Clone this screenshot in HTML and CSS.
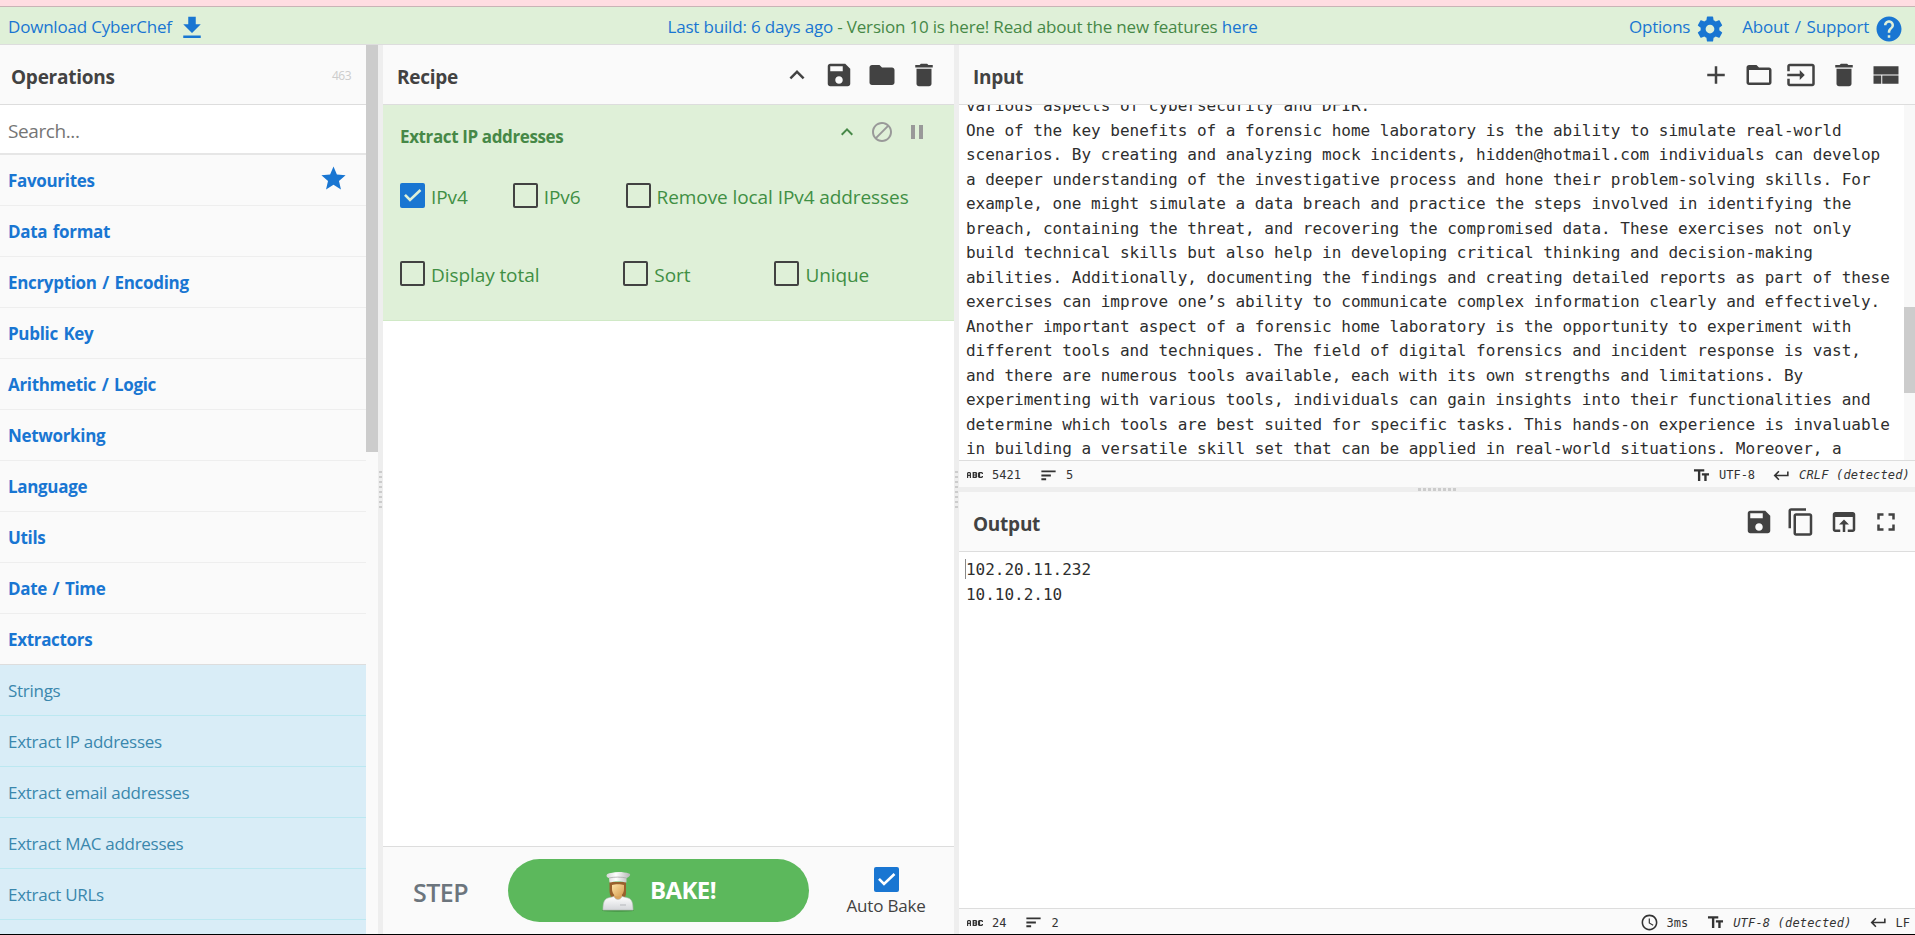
FILE: index.html
```html
<!DOCTYPE html>
<html lang="en">
<head>
<meta charset="utf-8">
<title>CyberChef</title>
<link rel="stylesheet" href="styles.css">
</head>
<body>
<svg class="defs" width="0" height="0">
  <symbol id="save" viewBox="0 0 24 24"><path d="M17 3H5c-1.11 0-2 .9-2 2v14c0 1.1.89 2 2 2h14c1.1 0 2-.9 2-2V7l-4-4zm-5 16c-1.66 0-3-1.34-3-3s1.34-3 3-3 3 1.34 3 3-1.34 3-3 3zm3-10H5V5h10v4z"/></symbol>
  <symbol id="folder" viewBox="0 0 24 24"><path d="M10 4H4c-1.1 0-1.99.9-1.99 2L2 18c0 1.1.9 2 2 2h16c1.1 0 2-.9 2-2V8c0-1.1-.9-2-2-2h-8l-2-2z"/></symbol>
  <symbol id="folder-open" viewBox="0 0 24 24"><path d="M20 6h-8l-2-2H4c-1.1 0-1.99.9-1.99 2L2 18c0 1.1.9 2 2 2h16c1.1 0 2-.9 2-2V8c0-1.1-.9-2-2-2zm0 12H4V8h16v10z"/></symbol>
  <symbol id="trash" viewBox="0 0 24 24"><path d="M6 19c0 1.1.9 2 2 2h8c1.1 0 2-.9 2-2V7H6v12zM19 4h-3.500l-1-1h-5l-1 1H5v2h14V4z"/></symbol>
  <symbol id="up" viewBox="0 0 24 24"><path d="M7.410 15.410 12 10.830l4.590 4.580L18 14l-6-6-6 6z"/></symbol>
  <symbol id="block" viewBox="0 0 24 24"><path d="M12 2C6.480 2 2 6.480 2 12s4.480 10 10 10 10-4.480 10-10S17.520 2 12 2zM4 12c0-4.420 3.580-8 8-8 1.850 0 3.550.63 4.900 1.690L5.690 16.900C4.630 15.550 4 13.850 4 12zm8 8c-1.850 0-3.550-.63-4.900-1.690L18.310 7.100C19.370 8.450 20 10.150 20 12c0 4.420-3.580 8-8 8z"/></symbol>
  <symbol id="pause" viewBox="0 0 24 24"><path d="M6 19h4V5H6v14zm8-14v14h4V5h-4z"/></symbol>
  <symbol id="plus" viewBox="0 0 24 24"><path d="M19 13h-6v6h-2v-6H5v-2h6V5h2v6h6v2z"/></symbol>
  <symbol id="input" viewBox="0 0 24 24"><path d="M21 3.010H3c-1.100 0-2 .9-2 2V9h2V4.990h18v14.030H3V15H1v4.010c0 1.100.9 1.980 2 1.980h18c1.100 0 2-.88 2-1.980v-14c0-1.110-.9-2-2-2zM11 16l4-4-4-4v3H1v2h10v3z"/></symbol>
  <symbol id="grid" viewBox="0 0 24 24"><path d="M2 5h20v6.500H2zM2 12.300h6.200V19H2zM9 12.300h13V19H9z"/></symbol>
  <symbol id="gear" viewBox="0 0 24 24"><path d="M19.430 12.980c.04-.32.07-.64.07-.98s-.03-.66-.07-.98l2.110-1.650c.19-.15.24-.42.12-.64l-2-3.460c-.12-.22-.39-.3-.61-.22l-2.490 1c-.52-.4-1.080-.73-1.690-.98l-.38-2.650C14.460 2.180 14.250 2 14 2h-4c-.25 0-.46.18-.49.42l-.38 2.650c-.61.25-1.170.59-1.690.98l-2.490-1c-.23-.09-.49 0-.61.22l-2 3.460c-.13.22-.07.49.12.64l2.110 1.650c-.04.32-.07.65-.07.98s.03.66.07.98l-2.110 1.650c-.19.15-.24.42-.12.64l2 3.460c.12.22.39.3.61.22l2.490-1c.52.4 1.080.73 1.690.98l.38 2.650c.03.24.24.42.49.42h4c.25 0 .46-.18.49-.42l.38-2.650c.61-.25 1.170-.59 1.690-.98l2.490 1c.23.09.49 0 .61-.22l2-3.460c.12-.22.07-.49-.12-.64l-2.110-1.650zM12 15.500c-1.930 0-3.500-1.570-3.500-3.500s1.570-3.500 3.500-3.500 3.500 1.570 3.500 3.500-1.570 3.500-3.500 3.500z"/></symbol>
  <symbol id="help" viewBox="0 0 24 24"><path d="M12 2C6.480 2 2 6.480 2 12s4.480 10 10 10 10-4.480 10-10S17.520 2 12 2zm1 17h-2v-2h2v2zm2.070-7.750l-.9.920C13.450 12.900 13 13.500 13 15h-2v-.5c0-1.100.45-2.100 1.170-2.830l1.240-1.260c.37-.36.59-.86.59-1.410 0-1.100-.9-2-2-2s-2 .9-2 2H8c0-2.210 1.790-4 4-4s4 1.790 4 4c0 .88-.36 1.680-.93 2.250z"/></symbol>
  <symbol id="download" viewBox="0 0 24 24"><path d="M19 9h-4V3H9v6H5l7 7 7-7zM5 18v2h14v-2H5z"/></symbol>
  <symbol id="star" viewBox="0 0 24 24"><path d="M12 17.270 18.180 21l-1.640-7.030L22 9.240l-7.190-.61L12 2 9.190 8.630 2 9.240l5.460 4.730L5.820 21z"/></symbol>
  <symbol id="copy" viewBox="0 0 24 24"><path d="M16 1H4c-1.100 0-2 .9-2 2v14h2V3h12V1zm3 4H8c-1.100 0-2 .9-2 2v14c0 1.100.9 2 2 2h11c1.100 0 2-.9 2-2V7c0-1.100-.9-2-2-2zm0 16H8V7h11v14z"/></symbol>
  <symbol id="open" viewBox="0 0 24 24"><path d="M19 4H5c-1.110 0-2 .9-2 2v12c0 1.100.89 2 2 2h4v-2H5V8h14v10h-4v2h4c1.100 0 2-.9 2-2V6c0-1.100-.89-2-2-2zm-7 6-4 4h3v6h2v-6h3l-4-4z"/></symbol>
  <symbol id="full" viewBox="0 0 24 24"><path d="M7 14H5v5h5v-2H7v-3zm-2-4h2V7h3V5H5v5zm12 7h-3v2h5v-5h-2v3zM14 5v2h3v3h2V5h-5z"/></symbol>
  <symbol id="lines" viewBox="0 0 24 24"><path d="M3 18h6v-2.400H3zM3 5.600V8h18V5.600zm0 7.600h12v-2.400H3z"/></symbol>
  <symbol id="tt" viewBox="0 0 24 24"><path d="M2.500 4v3h5v12h3V7h5V4h-13zm19 5h-9v3h3v7h3v-7h3V9z"/></symbol>
  <symbol id="ret" viewBox="0 0 24 24"><path d="M19 7v4H5.830l3.580-3.590L8 6l-6 6 6 6 1.410-1.410L5.830 13H21V7z"/></symbol>
  <symbol id="clock" viewBox="0 0 24 24"><path d="M11.990 2C6.470 2 2 6.480 2 12s4.470 10 9.990 10C17.520 22 22 17.520 22 12S17.520 2 11.990 2zM12 20c-4.420 0-8-3.580-8-8s3.580-8 8-8 8 3.580 8 8-3.580 8-8 8zm.5-13H11v6l5.250 3.150.75-1.230-4.500-2.670z"/></symbol>
  <symbol id="abc" viewBox="0 0 16 6"><path fill-rule="evenodd" d="M0 6V1l1-1h2l1 1v5H2.800V4H1.200v2zM1.200 1.200v1.500h1.600V1.200zM5.600 0h3.600l1 1v1.600l-.5.400.5.500V5l-1 1H5.600zM7 1.200v1.200h1.500V1.200zM7 3.600v1.200h1.500V3.600zM12 0h3l1 1v1h-1.300v-.8h-1.600v3.600h1.600V4H16v1l-1 1h-3l-1-1V1z"/></symbol>
  <symbol id="check" viewBox="0 0 25 25"><path d="M5 11.800 10 17 20.500 7" fill="none" stroke="currentColor" stroke-width="2.600"/></symbol>
</svg>

<div class="app">
  <div class="notice"></div>
  <header class="banner">
    <a class="download">Download CyberChef <svg class="ic ic29"><use href="#download"/></svg></a>
    <div class="news"><a>Last build: 6 days ago</a> - Version 10 is here! Read about the new features <a>here</a></div>
    <nav class="links">
      <a class="options">Options <svg class="ic ic29"><use href="#gear"/></svg></a>
      <a class="about">About / Support <svg class="ic ic29"><use href="#help"/></svg></a>
    </nav>
  </header>

  <main class="work">
    <aside class="operations">
      <div class="oplist">
        <div class="title"><h2>Operations</h2><span class="count">463</span></div>
        <div class="search">Search...</div>
        <div class="cat">Favourites<svg class="ic star"><use href="#star"/></svg></div>
        <div class="cat">Data format</div>
        <div class="cat">Encryption / Encoding</div>
        <div class="cat">Public Key</div>
        <div class="cat">Arithmetic / Logic</div>
        <div class="cat">Networking</div>
        <div class="cat">Language</div>
        <div class="cat">Utils</div>
        <div class="cat">Date / Time</div>
        <div class="cat open">Extractors</div>
        <div class="op">Strings</div>
        <div class="op">Extract IP addresses</div>
        <div class="op">Extract email addresses</div>
        <div class="op">Extract MAC addresses</div>
        <div class="op">Extract URLs</div>
        <div class="op"></div>
      </div>
      <div class="opscroll"><div class="opthumb"></div></div>
    </aside>

    <div class="gutter"><div class="dots"></div></div>

    <section class="recipe">
      <div class="title">
        <h2>Recipe</h2>
        <div class="tools recipe-tools">
          <svg class="ic ic29"><use href="#up"/></svg>
          <svg class="ic ic29"><use href="#save"/></svg>
          <svg class="ic ic29"><use href="#folder"/></svg>
          <svg class="ic ic29"><use href="#trash"/></svg>
        </div>
      </div>
      <div class="ingredient">
        <div class="ing-head">
          <h3>Extract IP addresses</h3>
          <div class="ing-tools">
            <svg class="ic green"><use href="#up"/></svg>
            <svg class="ic"><use href="#block"/></svg>
            <svg class="ic"><use href="#pause"/></svg>
          </div>
        </div>
        <div class="args first">
          <label class="arg"><span class="box on"><svg><use href="#check"/></svg></span>IPv4</label>
          <label class="arg"><span class="box"></span>IPv6</label>
          <label class="arg remove"><span class="box"></span>Remove local IPv4 addresses</label>
        </div>
        <div class="args second">
          <label class="arg"><span class="box"></span>Display total</label>
          <label class="arg"><span class="box"></span>Sort</label>
          <label class="arg"><span class="box"></span>Unique</label>
        </div>
      </div>
      <div class="rest"></div>
      <div class="controls">
        <div class="step">STEP</div>
        <div class="bake">
          <svg class="chef" viewBox="0 0 32 40">
            <defs>
              <linearGradient id="coat" x1="0" y1="0" x2="0" y2="1"><stop offset="0" stop-color="#fff"/><stop offset="1" stop-color="#d4d6da"/></linearGradient>
              <linearGradient id="hat" x1="0" y1="0" x2="1" y2="0"><stop offset="0" stop-color="#d6d6d6"/><stop offset=".4" stop-color="#fff"/><stop offset="1" stop-color="#b5b5b5"/></linearGradient>
              <linearGradient id="skin" x1="0" y1="0" x2="1" y2="1"><stop offset="0" stop-color="#ffe3a6"/><stop offset="1" stop-color="#d49a4e"/></linearGradient>
            </defs>
            <ellipse cx="16" cy="38.500" rx="16" ry="1.500" fill="#3f8740" opacity=".6"/>
            <path d="M7.500 10h16.500v10c0 4-1 5-2.500 6H10c-2-2-2.500-5-2.500-8z" fill="#99602d"/>
            <path d="M12 20h8v9h-8z" fill="#d9a35b"/>
            <path d="M1 38c0-8 1.500-11 5-12l6-1.500c1.500 4 6.500 4 8 0l6 1.500c3.500 1 5 4 5 12z" fill="url(#coat)" stroke="#b9bdbb" stroke-width=".6"/>
            <path d="M10 13c3-1 9-1 12 0v4c0 4-2.500 7.500-6 7.500s-6-3.500-6-7.500z" fill="url(#skin)"/>
            <path d="M18 33h6" stroke="#b5b7bb"/>
            <path d="M7 6C3 5 4 1 9 1c6-1.500 13-1 18 .5 2 .5 1.500 3-2.500 4.500v4.500c-5-1.500-12-1.500-17 0z" fill="url(#hat)"/>
            <path d="M7 6c5-1.200 12-1.200 17.500 0" stroke="#aaa" fill="none" stroke-width=".8"/>
          </svg>
          <span>BAKE!</span>
        </div>
        <div class="auto"><span class="box on"><svg><use href="#check"/></svg></span><span>Auto Bake</span></div>
      </div>
    </section>

    <div class="gutter"><div class="dots"></div></div>

    <section class="io">
      <div class="title">
        <h2>Input</h2>
        <div class="tools io-tools">
          <svg class="ic ic29"><use href="#plus"/></svg>
          <svg class="ic ic29"><use href="#folder-open"/></svg>
          <svg class="ic ic29"><use href="#input"/></svg>
          <svg class="ic ic29"><use href="#trash"/></svg>
          <svg class="ic ic29"><use href="#grid"/></svg>
        </div>
      </div>
      <div class="editor input">
<pre class="code">various aspects of cybersecurity and DFIR.
One of the key benefits of a forensic home laboratory is the ability to simulate real-world
scenarios. By creating and analyzing mock incidents, hidden@hotmail.com individuals can develop
a deeper understanding of the investigative process and hone their problem-solving skills. For
example, one might simulate a data breach and practice the steps involved in identifying the
breach, containing the threat, and recovering the compromised data. These exercises not only
build technical skills but also help in developing critical thinking and decision-making
abilities. Additionally, documenting the findings and creating detailed reports as part of these
exercises can improve one’s ability to communicate complex information clearly and effectively.
Another important aspect of a forensic home laboratory is the opportunity to experiment with
different tools and techniques. The field of digital forensics and incident response is vast,
and there are numerous tools available, each with its own strengths and limitations. By
experimenting with various tools, individuals can gain insights into their functionalities and
determine which tools are best suited for specific tasks. This hands-on experience is invaluable
in building a versatile skill set that can be applied in real-world situations. Moreover, a</pre>
        <div class="track"><div class="thumb"></div></div>
      </div>
      <div class="status in">
        <svg class="abc"><use href="#abc"/></svg><span class="num">5421</span>
        <svg class="ic s"><use href="#lines"/></svg><span>5</span>
        <span class="fill"></span>
        <svg class="ic s"><use href="#tt"/></svg><span class="enc">UTF-8</span>
        <svg class="ic s"><use href="#ret"/></svg><i>CRLF (detected)</i>
      </div>
      <div class="hgutter"><div class="hdots"></div></div>
      <div class="title">
        <h2>Output</h2>
        <div class="tools io-tools">
          <svg class="ic ic29"><use href="#save"/></svg>
          <svg class="ic ic29"><use href="#copy"/></svg>
          <svg class="ic ic29"><use href="#open"/></svg>
          <svg class="ic ic29"><use href="#full"/></svg>
        </div>
      </div>
      <div class="editor output">
<pre class="code">102.20.11.232
10.10.2.10</pre>
        <div class="caret"></div>
      </div>
      <div class="status out">
        <svg class="abc"><use href="#abc"/></svg><span class="num">24</span>
        <svg class="ic s"><use href="#lines"/></svg><span>2</span>
        <span class="fill"></span>
        <svg class="ic s"><use href="#clock"/></svg><span class="ms">3ms</span>
        <svg class="ic s"><use href="#tt"/></svg><i class="enc">UTF-8 (detected)</i>
        <svg class="ic s"><use href="#ret"/></svg><span>LF</span>
      </div>
    </section>
  </main>
</div>
</body>
</html>
```
FILE: styles.css
```css
* { box-sizing: border-box; }
body {
  margin: 0;
  background: #fff;
  color: #424242;
  font-family: "Open Sans", "Noto Sans", sans-serif;
  font-size: 17.500px;
  overflow: hidden;
}
.defs { position: absolute; }
.app { height: 935px; display: flex; flex-direction: column; border-bottom: 1px solid #000; }
.ic { display: block; width: 24px; height: 24px; fill: currentColor; flex: none; }
.ic29 { width: 30px; height: 30px; }

.notice { height: 7px; background: #ffdde2; border-bottom: 1px solid #c9b4b6; flex: none; }
.banner {
  height: 38px;
  flex: none;
  display: grid;
  grid-template-columns: 1fr auto 1fr;
  background: #dff0d8;
  border-bottom: 1px solid #ddd;
  color: #468847;
  font-size: 17px;
  line-height: 39px;
  white-space: nowrap;
}
.banner a { color: #1976d2; }
.download { display: flex; padding-left: 8px; gap: 5px; letter-spacing: -0.200px; }
.download .ic { margin-top: 6px; }
.news { padding-left: 10px; letter-spacing: -0.180px; }
.links { display: flex; justify-content: flex-end; padding-right: 11px; gap: 17px; letter-spacing: -0.200px; word-spacing: 1.500px; }
.links a { display: flex; gap: 5px; }
.links .ic { margin-top: 7px; }

.work { display: flex; flex: 1; min-height: 0; }
.operations { width: 378px; display: flex; background: #fafafa; overflow: hidden; }
.oplist { width: 366px; }
.opscroll { width: 12px; }
.opthumb { height: 407px; background: #ccc; }
.title {
  height: 60px;
  flex: none;
  display: flex;
  justify-content: space-between;
  background: #fafafa;
  border-bottom: 1px solid #ddd;
}
h2, h3 { margin: 0; }
h2 { font-size: 19px; line-height: 64px; padding-left: 14px; letter-spacing: -0.250px; }
.oplist h2 { padding-left: 11px; }
.count { font-size: 12px; color: #ccc; line-height: 62px; padding-right: 15px; letter-spacing: -0.500px; }
.search { height: 50px; background: #fff; border-bottom: 2px solid #e6e6e6; padding-left: 8px; font-size: 19px; line-height: 53px; color: #757575; letter-spacing: -0.400px; }
.cat, .op { height: 51px; padding-left: 8px; line-height: 52px; border-bottom: 1px solid #eee; font-size: 17px; }
.cat { font-weight: 700; color: #1976d2; display: flex; justify-content: space-between; letter-spacing: -0.320px; word-spacing: 1.500px; }
.cat.open { border-color: #ddd; }
.star { width: 29px; height: 29px; margin: 9px 18px 0 0; }
.op { background: #d9edf7; color: #3a87ad; border-color: #bce8f1; letter-spacing: -0.280px; }

.gutter { width: 5px; flex: none; background: #eee; display: flex; align-items: center; }
.dots { width: 3px; height: 38px; margin-left: 1px; background: repeating-linear-gradient(#ccc 0 2px, transparent 2px 5px); }
.recipe { width: 571px; display: flex; flex-direction: column; }
.tools { display: flex; padding-top: 15px; }
.recipe-tools { gap: 12.500px; padding-right: 15px; }
.io-tools { gap: 12.500px; padding-right: 14px; }

.ingredient { height: 216px; background: #dff0d8; border-bottom: 1px solid #d0e9c6; color: #468847; }
.ing-head { height: 64px; display: flex; justify-content: space-between; padding: 0 25px 0 17px; }
h3 { font-size: 17px; line-height: 63px; letter-spacing: -0.380px; }
.ing-tools { display: flex; gap: 11px; padding-top: 15px; color: #999; }
.green { color: #468847; }
.args { display: flex; padding-left: 17px; font-size: 19px; line-height: 28px; color: #3f8f44; letter-spacing: -0.080px; white-space: nowrap; }
.arg { display: flex; gap: 6px; }
.first { padding-top: 14px; height: 78px; gap: 45px; }
.second { padding-top: 14px; gap: 84px; }
.box { width: 25px; height: 25px; flex: none; border: 2px solid #424242; border-radius: 2px; display: block; }
.box.on { border: 0; background: #1976d2; color: #dff0d8; }
.box svg { display: block; width: 25px; height: 25px; }
.rest { flex: 1; }
.controls { height: 88px; border-top: 1px solid #ddd; background: #fafafa; display: flex; }
.step { width: 125px; padding-left: 30px; font-size: 25px; font-weight: 600; line-height: 90px; color: #6c757d; letter-spacing: -0.500px; }
.bake { width: 301px; height: 63px; margin-top: 12px; border-radius: 32px; background: #5cb85c; color: #fff; font-weight: 700; font-size: 24px; line-height: 61px; display: flex; padding-left: 94px; gap: 16px; letter-spacing: -0.600px; }
.chef { width: 32px; height: 42px; margin-top: 12px; }
.auto { flex: 1; display: flex; flex-direction: column; align-items: center; padding: 20px 0 0 9px; font-size: 17px; line-height: 28px; letter-spacing: -0.200px; }
.auto .box { color: #fff; }

.io { flex: 1; min-width: 0; display: flex; flex-direction: column; }
.editor { position: relative; overflow: hidden; flex: none; }
.input { height: 355px; }
.output { height: 356px; }
.code { margin: 0; padding-left: 7px; font: 16px/24.500px "DejaVu Sans Mono", monospace; letter-spacing: -0.010px; color: #2e2e2e; }
.input .code { margin-top: -11px; }
.output .code { padding-top: 6px; }
.track { position: absolute; top: 0; right: 0; width: 11px; height: 100%; background: #f8f8f8; padding-top: 202px; }
.thumb { height: 86px; background: #ccc; }
.caret { position: absolute; left: 6px; top: 7px; width: 1px; height: 20px; background: #888; }
.status { height: 27px; flex: none; border-top: 1px solid #ddd; background: #fafafa; display: flex; align-items: center; padding: 2px 5px 0 8px; font: 12px/24px "DejaVu Sans Mono", monospace; color: #333; }
.status i { letter-spacing: 0.170px; }
.out { height: 26px; }
.s { width: 19px; height: 19px; margin-right: 8px; }
.abc { width: 16px; height: 6px; margin-right: 9px; fill: #333; }
.num { margin-right: 18px; }
.fill { flex: 1; }
.enc { margin-right: 17px; }
.ms { margin-right: 18px; }
.hgutter { height: 5px; background: #eee; flex: none; display: flex; justify-content: center; }
.hdots { width: 38px; height: 3px; margin-top: 1px; background: repeating-linear-gradient(90deg, #ccc 0 3px, transparent 3px 5px); }
```
